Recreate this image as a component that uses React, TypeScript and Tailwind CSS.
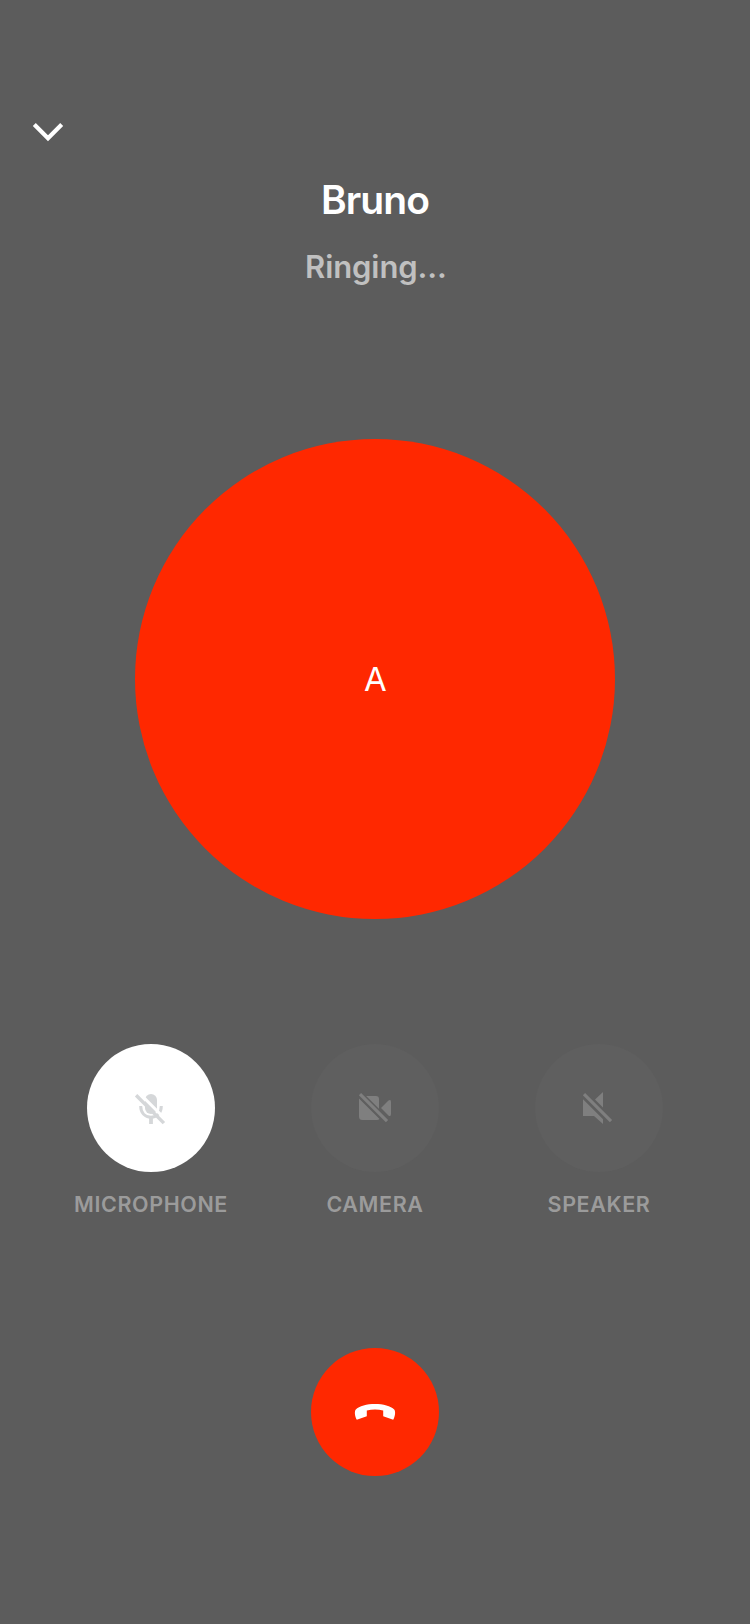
import type { ReactNode } from "react";

function MicOffIcon() {
  return (
    <svg viewBox="-1 -4 64 64" className="size-16 text-[#d5d7d9]" fill="none" stroke="currentColor">
      <rect x="25" y="14" width="12" height="20" rx="6" fill="currentColor" stroke="none" />
      <path d="M20.7 26C20.7 32.6 24.7 37.3 31 37.3S41.3 32.6 41.3 26" strokeWidth="3" />
      <path d="M31 37V44" strokeWidth="3.8" />
      <path d="M18.8 12.6L48 41.8" stroke="#fff" strokeWidth="3" />
      <path d="M16.1 15.3L43.9 43.1" strokeWidth="3.4" />
    </svg>
  );
}

function CameraOffIcon() {
  return (
    <svg viewBox="-2 -4 64 64" className="size-16 text-[#7f7f7f]" fill="currentColor">
      <path d="M19 16H31Q34 16 34 19V31ZM14 18.4L34.6 39Q33.5 40 32 40H17.5Q14 40 14 36.5Z" />
      <path d="M36 28L43.2 20.8Q46 18.6 46 22V34Q46 37.4 43.2 35.2Z" />
      <path d="M15 14.2L42 41.2" stroke="#5f5f5f" strokeWidth="6.2" />
      <path d="M15 14.2L42 41.2" stroke="currentColor" strokeWidth="3.2" />
    </svg>
  );
}

function SpeakerOffIcon() {
  return (
    <svg viewBox="-3 -4 64 64" className="size-16 text-[#7f7f7f]" fill="currentColor">
      <path d="M25 19.6L33 12V27.6ZM13 19.2L33 39.2V44L24 36H13Z" />
      <path d="M14 14.2L41 41.2" stroke="currentColor" strokeWidth="3.2" />
    </svg>
  );
}

function HangUpIcon() {
  return (
    <svg viewBox="43 40 64 64" className="size-16" fill="#fff">
      <path d="M75 64C83 64 91 66 94.2 69.6C95.8 71.5 95.2 76.5 93.2 79.8L83.2 76.2V70.6Q75 68.2 66.8 70.6V76.2L56.8 79.8C54.8 76.5 54.2 71.5 55.8 69.6C59 66 67 64 75 64Z" />
    </svg>
  );
}

function Control({ label, active, children }: { label: string; active?: boolean; children: ReactNode }) {
  return (
    <div className="flex w-56 flex-col items-center">
      <button
        aria-label={label}
        className={`flex size-32 items-center justify-center rounded-full ${active ? "bg-white" : "bg-[#5f5f5f]"}`}
      >
        {children}
      </button>
      <span className="mt-4 text-[21.5px] leading-8 font-semibold tracking-[0.6px] text-[#9b9b9b]">{label}</span>
    </div>
  );
}

export default function App() {
  return (
    <main className="flex h-[1624px] w-[750px] flex-col items-center bg-[#5c5c5c] font-['Inter',sans-serif]">
      <header className="flex h-[439px] w-full flex-col items-center pt-[112px]">
        <button aria-label="Minimize call" className="ml-6 flex size-12 items-center justify-center self-start">
          <svg viewBox="0 0 48 48" className="size-12" fill="none" stroke="#fff" strokeWidth="4.2">
            <path d="M10.3 12.6L24 26.3L37.7 12.6" />
          </svg>
        </button>
        <h1 className="mt-4 text-[39px] leading-[48px] font-semibold tracking-[-0.9px] text-white">Bruno</h1>
        <p className="mt-[23px] ml-0.5 text-[31px] leading-10 font-semibold tracking-[-0.1px] text-[#c0c0c0]">Ringing...</p>
      </header>
      <div className="flex size-[480px] items-center justify-center rounded-full bg-[#ff2800] pt-0.5 pl-px text-[33px] text-white">
        A
      </div>
      <div className="mt-[125px] flex">
        <Control label="MICROPHONE" active>
          <MicOffIcon />
        </Control>
        <Control label="CAMERA">
          <CameraOffIcon />
        </Control>
        <Control label="SPEAKER">
          <SpeakerOffIcon />
        </Control>
      </div>
      <button
        aria-label="End call"
        className="mt-32 flex size-32 items-center justify-center rounded-full bg-[#ff2800]"
      >
        <HangUpIcon />
      </button>
    </main>
  );
}
